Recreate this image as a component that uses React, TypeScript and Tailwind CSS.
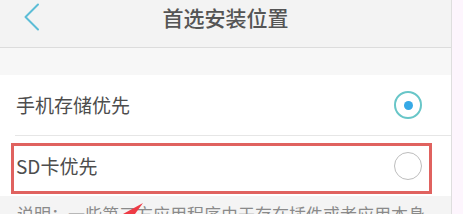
export default function App() {
  const cjk = { fontFamily: '"Noto Sans CJK SC", "Noto Sans", sans-serif' };

  return (
    <div className="relative flex h-[214px] w-[463px] overflow-hidden bg-white" style={cjk}>
      <div className="flex w-[451px] flex-none flex-col">
        {/* Title bar */}
        <header className="relative h-[48px] flex-none border-b border-[#dcdcdc] bg-[#f3f3f3]">
          <svg
            className="absolute left-[22px] top-[3px]"
            width="20"
            height="28"
            viewBox="0 0 20 28"
            fill="none"
          >
            <path d="M16 1.5 L3.5 14 L16 26.5" stroke="#5cbdd6" strokeWidth="2" strokeLinecap="round" strokeLinejoin="round" />
          </svg>
          <h1 className="text-center text-[21px] leading-[34px] font-medium text-[#555]">首选安装位置</h1>
        </header>

        <div className="h-[27px] flex-none bg-[#f7f7f7]" />

        {/* Options */}
        <div className="flex-none bg-white">
          <div className="flex h-[60px] items-center justify-between pl-[16px] pr-[29px]">
            <span className="text-[19px] text-[#4d4d4d]">手机存储优先</span>
            <span className="flex h-[28px] w-[28px] items-center justify-center rounded-full border-2 border-[#68c6c8]">
              <span className="h-[9px] w-[9px] rounded-full bg-[#36a9e6]" />
            </span>
          </div>
          <div className="ml-[15px] h-px bg-[#e6e6e6]" />
          <div className="flex h-[60px] items-center justify-between pl-[16px] pr-[29px]">
            <span className="text-[19px] text-[#4d4d4d]">SD卡优先</span>
            <span className="h-[28px] w-[28px] rounded-full border-[1.5px] border-[#bdbdbd]" />
          </div>
        </div>

        <div className="flex-1 bg-[#f4f4f4] px-[17px] pt-[6px]">
          <p className="whitespace-nowrap text-[17px] leading-[24px] text-[#8a8a8a]">
            说明：一些第三方应用程序由于存在插件或者应用本身
          </p>
        </div>
      </div>

      <div className="w-px flex-none bg-[#dedede]" />
      <div className="flex-1 bg-[#fdf5fd]" />

      {/* Annotation overlay */}
      <div className="pointer-events-none absolute left-[11px] top-[143px] h-[51px] w-[421px] border-[3px] border-[#e0625f]" />
      <svg className="pointer-events-none absolute left-[120px] top-[201px]" width="26" height="13" viewBox="0 0 26 13">
        <polygon points="23,2 3,13 15,13" fill="#ee3b45" />
      </svg>
    </div>
  );
}
